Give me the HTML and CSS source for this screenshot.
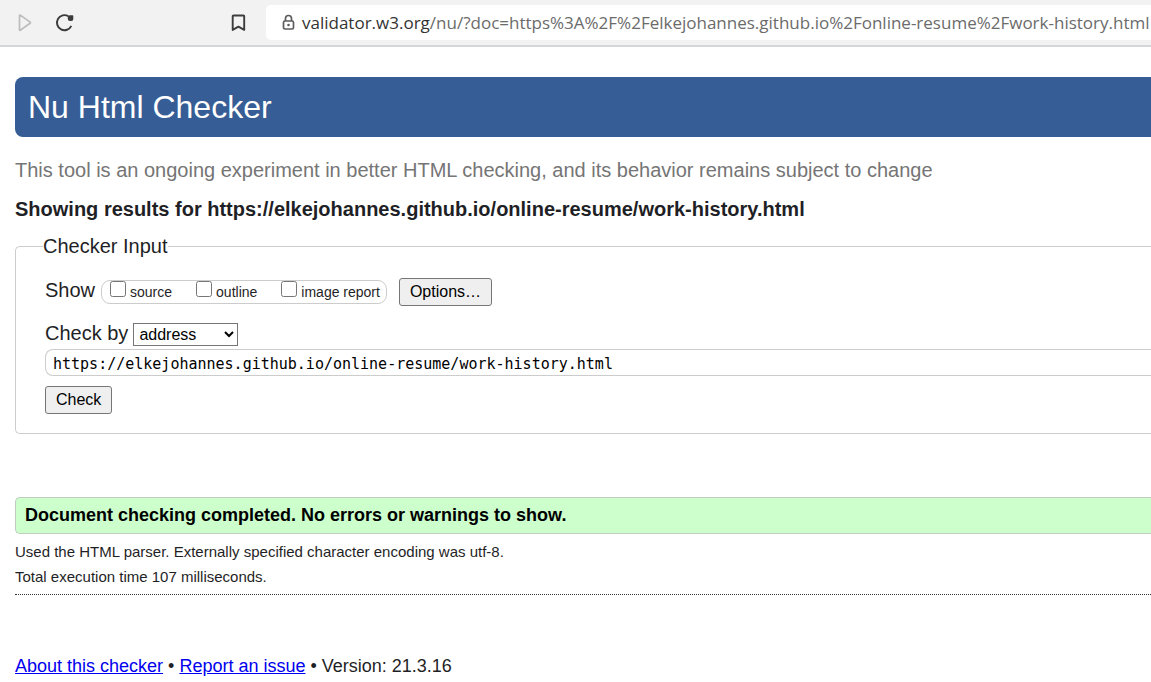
FILE: index.html
```html
<!DOCTYPE html>
<html lang="en">
<head>
<meta charset="utf-8">
<title>Nu Html Checker</title>
<link rel="stylesheet" href="styles.css">
</head>
<body>
<div class="toolbar">
  <div class="nav">
    <button class="tool" type="button" aria-label="Forward">
      <svg width="24" height="24" viewBox="0 0 24 24" fill="none" stroke="#bdbdbd" stroke-width="1.7" stroke-linejoin="round"><path d="M7.500 4.500v14.400a.5.5 0 0 0 .8.400l9.800-7a.7.7 0 0 0 0-1.200l-9.800-7a.5.5 0 0 0-.8.400z"/></svg>
    </button>
    <button class="tool" type="button" aria-label="Reload">
      <svg width="24" height="24" viewBox="0 0 24 24" fill="none" stroke="#3c3c3c" stroke-width="1.9"><path d="M19.300 14.800A7.500 7.500 0 1 1 16.400 5.300"/><path d="M15.800 6.200a2 2 0 0 1 2-1.900h2.700q.8 0 .8.800v2.900a2 2 0 0 1-2 2h-1.200a2.300 2.300 0 0 1-2.300-2.300z" fill="#3c3c3c" stroke="none"/></svg>
    </button>
  </div>
  <button class="tool" type="button" aria-label="Bookmark">
    <svg width="24" height="24" viewBox="0 0 24 24" fill="none" stroke="#3c3c3c" stroke-width="1.9" stroke-linejoin="round"><path d="M7.500 4.500h9.900a.8.8 0 0 1 .8.8v13.600l-5.750-3.200-5.750 3.200v-13.600a.8.8 0 0 1 .8-.8z"/></svg>
  </button>
  <div class="address">
    <svg width="16" height="18" viewBox="0 0 16 18" fill="none" stroke="#5c5c5c" stroke-width="1.700"><rect x="3.500" y="7" width="10" height="8" rx="1.500"/><path d="M5.500 7V4.500a3 3 0 0 1 6 0V7"/><circle cx="8.500" cy="11" r="1.300" fill="#5c5c5c" stroke="none"/></svg>
    <span class="url"><span class="host">validator.w3.org</span>/nu/?doc=https%3A%2F%2Felkejohannes.github.io%2Fonline-resume%2Fwork-history.html</span>
  </div>
</div>
<main class="page">
  <h1 class="banner">Nu Html Checker</h1>
  <p class="notice">This tool is an ongoing experiment in better HTML checking, and its behavior remains subject to change</p>
  <h2 class="target">Showing results for https://elkejohannes.github.io/online-resume/work-history.html</h2>
  <form>
    <fieldset class="checker">
      <legend>Checker Input</legend>
      <div class="rows">
        <div class="row show">
          <span class="label">Show</span>
          <div class="choices">
            <label><input type="checkbox">source</label>
            <label><input type="checkbox">outline</label>
            <label><input type="checkbox">image report</label>
          </div>
          <button class="btn" type="button">Options…</button>
        </div>
        <div class="row by">
          <label class="label" for="method">Check by</label>
          <select id="method"><option>address</option><option>file upload</option><option>text input</option></select>
        </div>
        <input class="doc" type="text" aria-label="Address" value="https://elkejohannes.github.io/online-resume/work-history.html">
        <button class="btn" type="button">Check</button>
      </div>
    </fieldset>
  </form>
  <p class="success">Document checking completed. No errors or warnings to show.</p>
  <div class="details">
    <p>Used the HTML parser. Externally specified character encoding was utf-8.</p>
    <p>Total execution time 107 milliseconds.</p>
  </div>
  <footer class="about"><a href="#about">About this checker</a> • <a href="#issue">Report an issue</a> • Version: 21.3.16</footer>
</main>
</body>
</html>
```
FILE: styles.css
```css
* {
  box-sizing: border-box;
}

body {
  margin: 0;
  background: #fff;
  color: #1f1f26;
  font-family: "Liberation Sans", Arial, sans-serif;
  overflow-x: hidden;
}

h1, h2, p {
  margin: 0;
}

.toolbar {
  display: flex;
  align-items: center;
  height: 47px;
  padding-left: 12px;
  background: #f2f2f2;
  border-bottom: 2px solid #d3d7da;
}

.nav {
  display: flex;
  gap: 16px;
  width: 214px;
}

.tool {
  display: block;
  width: 24px;
  height: 24px;
  padding: 0;
  border: 0;
  background: none;
}

.tool svg {
  display: block;
}

.address {
  display: flex;
  flex: 1;
  align-items: center;
  gap: 6px;
  min-width: 0;
  height: 35px;
  margin-left: 16px;
  padding-left: 14px;
  border-radius: 5px 0 0 5px;
  background: #fff;
}

.address svg {
  flex: none;
}

.url {
  color: #6b6b6b;
  font: 17px/24px "Open Sans", "Noto Sans", sans-serif;
  white-space: nowrap;
}

.host {
  color: #333;
}

.page {
  padding: 30px 0 0 15px;
}

.banner {
  padding: 10px 13px;
  border-radius: 8px 0 0 8px;
  background: #365d95;
  color: #fff;
  font-size: 32px;
  font-weight: 400;
  line-height: 40px;
}

.notice {
  margin-top: 21px;
  color: #757575;
  font-size: 20px;
  line-height: 24px;
}

.target {
  margin-top: 15px;
  font-size: 20px;
  line-height: 24px;
}

.checker {
  min-width: 0;
  margin: 13px 0 0;
  padding: 20px 0 19px 27px;
  border: 1px solid #ccc;
  border-right: 0;
  border-radius: 5px 0 0 5px;
  font-size: 20px;
  line-height: 24px;
}

.checker legend {
  padding: 0;
}

.rows {
  padding-left: 2px;
}

.row {
  display: flex;
  align-items: baseline;
}

.show .btn {
  margin-left: 12px;
}

.choices {
  display: flex;
  gap: 24px;
  height: 24px;
  margin-left: 6px;
  padding: 0 6px 0 8px;
  border: 1px solid #ccc;
  border-radius: 9px;
  font-size: 14px;
  line-height: 22px;
}

.choices label {
  display: flex;
  gap: 4px;
}

.choices input {
  width: 16px;
  height: 16px;
  margin: 0;
}

.btn {
  display: block;
  height: 28px;
  padding: 0 10px;
  border: 1px solid #767676;
  border-radius: 3px;
  background: #efefef;
  color: #000;
  font: 16px/24px "Liberation Sans", Arial, sans-serif;
}

.by {
  gap: 5px;
  margin-top: 15px;
}

.by select {
  width: 105px;
  height: 23px;
  padding: 0 1px;
  border: 1px solid #767676;
  border-radius: 0;
  background: #fff;
  color: #000;
  font: 16px "Liberation Sans", Arial, sans-serif;
}

.doc {
  display: block;
  width: 100%;
  height: 27px;
  margin: 3px 0 10px;
  padding: 2px 7px 0;
  border: 1px solid #ccc;
  border-right: 0;
  border-radius: 8px 0 0 8px;
  color: #000;
  font: 15px Consolas, "DejaVu Sans Mono", monospace;
}

.success {
  margin-top: 63px;
  padding: 5px 9px;
  border: 1px solid #c0ccc0;
  border-right: 0;
  border-radius: 5px 0 0 5px;
  background: #cfc;
  color: #000;
  font-size: 18px;
  font-weight: 700;
  line-height: 25px;
}

.details {
  padding: 5px 0;
  border-bottom: 1px dotted #333;
  font-size: 15px;
  line-height: 25px;
}

.about {
  padding: 59px 0 4px;
  font-size: 18px;
  line-height: 24px;
}

.about a {
  color: #00e;
}
```
